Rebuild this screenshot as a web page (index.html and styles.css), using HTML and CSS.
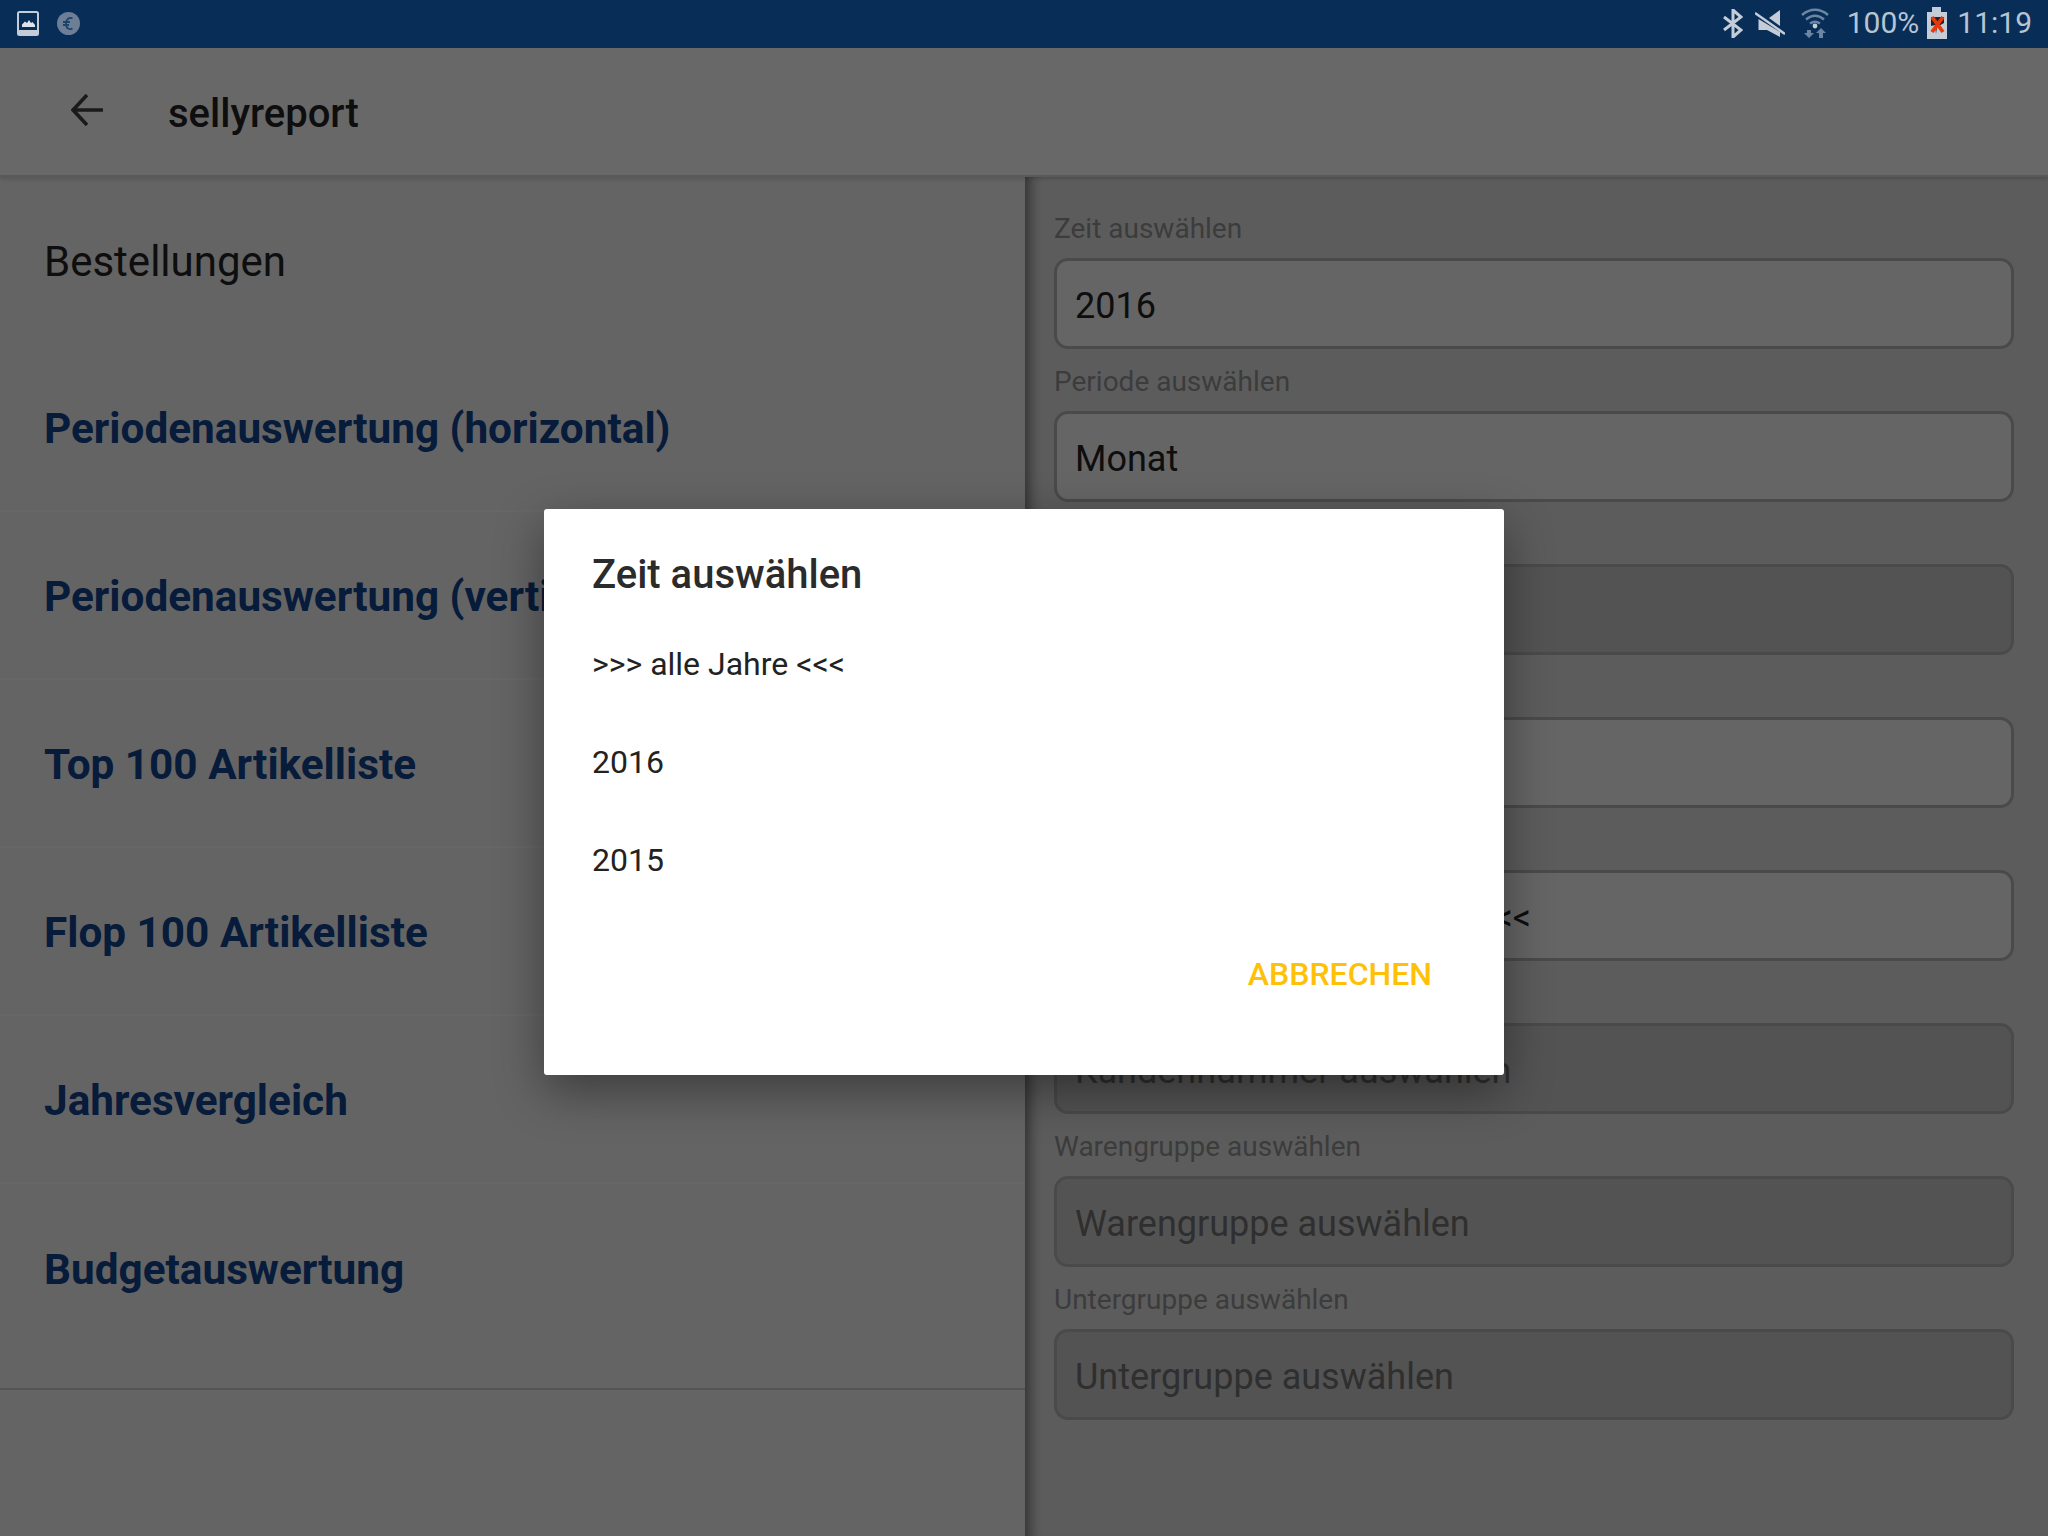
FILE: index.html
```html
<!DOCTYPE html>
<html lang="de">
<head>
    <meta charset="UTF-8">
    <meta name="viewport" content="width=device-width, initial-scale=1.0">
    <title>sellyreport</title>
    <link rel="stylesheet" href="styles.css">
</head>
<body>
    <div class="statusbar">
        <div class="status-left">
            <svg class="icon-image" viewBox="0 0 22 25" width="22" height="25">
                <rect x="1" y="1" width="20" height="23" rx="1.5" fill="none" stroke="#c3ccd7" stroke-width="2"/>
                <rect x="1" y="19" width="20" height="5" fill="#c3ccd7"/>
                <path d="M5 16v-2.500l3-3 2 1.500 2-3 2 3 1.500-1 2.500 3v2z" fill="#dfe4ea"/>
            </svg>
            <svg class="icon-euro" viewBox="0 0 23 23" width="23" height="23">
                <circle cx="11.500" cy="11.500" r="11.500" fill="#6d7f96"/>
                <path d="M15.500 6.500c-3-1.500-6-.3-6.500 5-.3 5 3.500 6.500 6.500 5M6 10h7M6 13h6" fill="none" stroke="#1f4268" stroke-width="1.800"/>
            </svg>
        </div>
        <div class="status-right">
            <svg class="icon-bt" viewBox="0 0 21 29" width="21" height="29">
                <path d="M2 8l17 13-8 7V1l8 7L2 21" fill="none" stroke="#c3ccd7" stroke-width="3"/>
            </svg>
            <svg class="icon-mute" viewBox="0 0 30 30" width="30" height="30">
                <path d="M25 2v16L14 10zM3.500 11L25 24V29L12 22H3.500z" fill="#c3ccd7"/>
                <path d="M0 5l30 21" stroke="#c3ccd7" stroke-width="2.600"/>
            </svg>
            <svg class="icon-wifi" viewBox="0 0 28 30" width="28" height="30">
                <path d="M1 7c8-7 18-7 26 0M5 11.500c6-5 12-5 18 0M9 15.500c3.500-2.500 6.500-2.500 10 0" fill="none" stroke="#6a86a3" stroke-width="2.400"/>
                <circle cx="14" cy="18" r="2.400" fill="#c3ccd7"/>
                <path d="M6 22h4v3h3l-5 5-5-5h3zM18 30v-5h-3l5-5 5 5h-3v5z" fill="#6a86a3"/>
            </svg>
            <span class="status-text battery-text">100%</span>
            <svg class="icon-battery" viewBox="0 0 20 32" width="20" height="32">
                <path d="M5 0h9v5h6v27H0V5h5z" fill="#c3ccd7"/>
                <path d="M4 10h13v6L10 20l-1 7-1-9-4 1z" fill="#222"/>
                <path d="M5 10l11 15M16 10L5 25" stroke="#e8380d" stroke-width="3.800"/>
            </svg>
            <span class="status-text time-text">11:19</span>
        </div>
    </div>

    <header class="appbar">
        <svg class="icon-back" viewBox="0 0 32 32" width="32" height="32">
            <path d="M32 16H3M16 1L2 16l14 15" fill="none" stroke="#3f3f3f" stroke-width="3.600"/>
        </svg>
        <span class="appbar-title">sellyreport</span>
    </header>

    <main class="content">
        <aside class="sidebar">
            <div class="sidebar-title">Bestellungen</div>
            <ul class="report-list">
                <li class="report-item">Periodenauswertung (horizontal)</li>
                <li class="report-item">Periodenauswertung (vertikal)</li>
                <li class="report-item">Top 100 Artikelliste</li>
                <li class="report-item">Flop 100 Artikelliste</li>
                <li class="report-item">Jahresvergleich</li>
                <li class="report-item">Budgetauswertung</li>
            </ul>
        </aside>

        <section class="filters">
            <div class="field">
                <label class="field-label">Zeit auswählen</label>
                <div class="field-box">2016</div>
            </div>
            <div class="field">
                <label class="field-label">Periode auswählen</label>
                <div class="field-box">Monat</div>
            </div>
            <!-- labels of the next rows sit behind the dialog -->
            <div class="field">
                <label class="field-label"></label>
                <div class="field-box disabled"></div>
            </div>
            <div class="field">
                <label class="field-label"></label>
                <div class="field-box"></div>
            </div>
            <div class="field">
                <label class="field-label"></label>
                <div class="field-box">&gt;&gt;&gt; alle Kundengruppen&nbsp; &lt;&lt;&lt;</div>
            </div>
            <div class="field">
                <label class="field-label"></label>
                <div class="field-box disabled">Kundennummer auswählen</div>
            </div>
            <div class="field">
                <label class="field-label">Warengruppe auswählen</label>
                <div class="field-box disabled">Warengruppe auswählen</div>
            </div>
            <div class="field">
                <label class="field-label">Untergruppe auswählen</label>
                <div class="field-box disabled">Untergruppe auswählen</div>
            </div>
        </section>
    </main>

    <div class="dim"></div>

    <div class="dialog">
        <h2 class="dialog-title">Zeit auswählen</h2>
        <ul class="dialog-list">
            <li class="dialog-item">&gt;&gt;&gt; alle Jahre &lt;&lt;&lt;</li>
            <li class="dialog-item">2016</li>
            <li class="dialog-item">2015</li>
        </ul>
        <div class="dialog-actions">
            <span class="dialog-cancel">ABBRECHEN</span>
        </div>
    </div>
</body>
</html>
```

FILE: styles.css
```css
* {
    box-sizing: border-box;
}

body {
    margin: 0;
    width: 2048px;
    height: 1536px;
    overflow: hidden;
    position: relative;
    font-family: Roboto, "Liberation Sans", sans-serif;
    background-color: #f2f2f2;
}

/* Status bar stays above the dim layer */
.statusbar {
    position: relative;
    z-index: 3;
    height: 48px;
    display: flex;
    justify-content: space-between;
    align-items: center;
    padding: 0 16px 0 17px;
    background-color: #082e57;
}

.status-left {
    display: flex;
    align-items: center;
    gap: 18px;
    margin-top: -2px;
}

.status-right {
    display: flex;
    align-items: center;
    margin-top: -2px;
}

.status-left svg,
.status-right svg {
    display: block;
}

.icon-mute {
    margin-left: 12px;
}

.icon-wifi {
    margin-left: 16px;
}

.status-text {
    font-size: 30px;
    line-height: 48px;
    color: #b8c4d1;
}

.battery-text {
    margin-left: 18px;
}

.icon-battery {
    margin-left: 8px;
}

.time-text {
    margin-left: 10px;
}

.appbar {
    height: 129px;
    display: flex;
    align-items: center;
    padding-left: 71px;
    background-color: #f8f8f8;
    border-bottom: 2px solid #d4d4d4;
    box-shadow: 0 2px 4px rgba(0, 0, 0, 0.15);
    position: relative;
    z-index: 1;
}

.icon-back {
    margin-top: -4px;
}

.appbar-title {
    margin-left: 65px;
    padding-top: 4px;
    font-size: 40px;
    font-weight: 500;
    color: #222;
}

.content {
    display: flex;
    height: 1359px;
}

.sidebar {
    width: 1025px;
    background-color: #eeeeee;
}

.sidebar-title {
    height: 167px;
    padding: 58px 0 0 44px;
    font-size: 42px;
    line-height: 54px;
    color: #222;
}

.report-list {
    list-style: none;
    margin: 0;
    padding: 0 0 36px;
    border-bottom: 2px solid #c8c8c8;
}

.report-item {
    height: 168px;
    padding: 2px 0 0 44px;
    display: flex;
    align-items: center;
    font-size: 42.3px;
    font-weight: 700;
    color: #12418a;
    border-bottom: 2px solid #f6f6f6;
}

.report-item:last-child {
    border-bottom: none;
}

.filters {
    flex: 1;
    padding: 28px 34px 0 29px;
    background-color: #dcdcdc;
    box-shadow: inset 16px 0 14px -12px rgba(0, 0, 0, 0.5);
}

.field {
    margin-bottom: 9px;
}

.field-label {
    display: block;
    height: 46px;
    margin-bottom: 7px;
    padding-top: 1px;
    font-size: 28px;
    line-height: 46px;
    color: #8f8f8f;
}

.field-box {
    height: 91px;
    padding: 4px 18px 0;
    display: flex;
    align-items: center;
    font-size: 36px;
    color: #222;
    background-color: #f0f0f0;
    border: 3px solid #b0b0b0;
    border-radius: 14px;
}

.field-box.disabled {
    color: #707070;
    background-color: #c6c6c6;
}

.dim {
    position: absolute;
    top: 0;
    left: 0;
    right: 0;
    bottom: 0;
    z-index: 2;
    background: rgba(0, 0, 0, 0.58);
}

.dialog {
    position: absolute;
    top: 509px;
    left: 544px;
    z-index: 3;
    width: 960px;
    height: 566px;
    padding: 0 48px;
    background: #fff;
    border-radius: 3px;
    box-shadow: 0 16px 48px rgba(0, 0, 0, 0.4);
}

.dialog-title {
    margin: 0;
    padding-top: 41px;
    font-size: 40px;
    line-height: 50px;
    font-weight: 500;
    color: #2b2b2b;
}

.dialog-list {
    list-style: none;
    margin: 15px 0 0;
    padding: 0;
}

.dialog-item {
    height: 98px;
    display: flex;
    align-items: center;
    font-size: 32px;
    color: #222;
}

.dialog-actions {
    display: flex;
    justify-content: flex-end;
    padding: 46px 24px 0 0;
}

.dialog-cancel {
    font-size: 32px;
    font-weight: 500;
    color: #ffc107;
}
```
